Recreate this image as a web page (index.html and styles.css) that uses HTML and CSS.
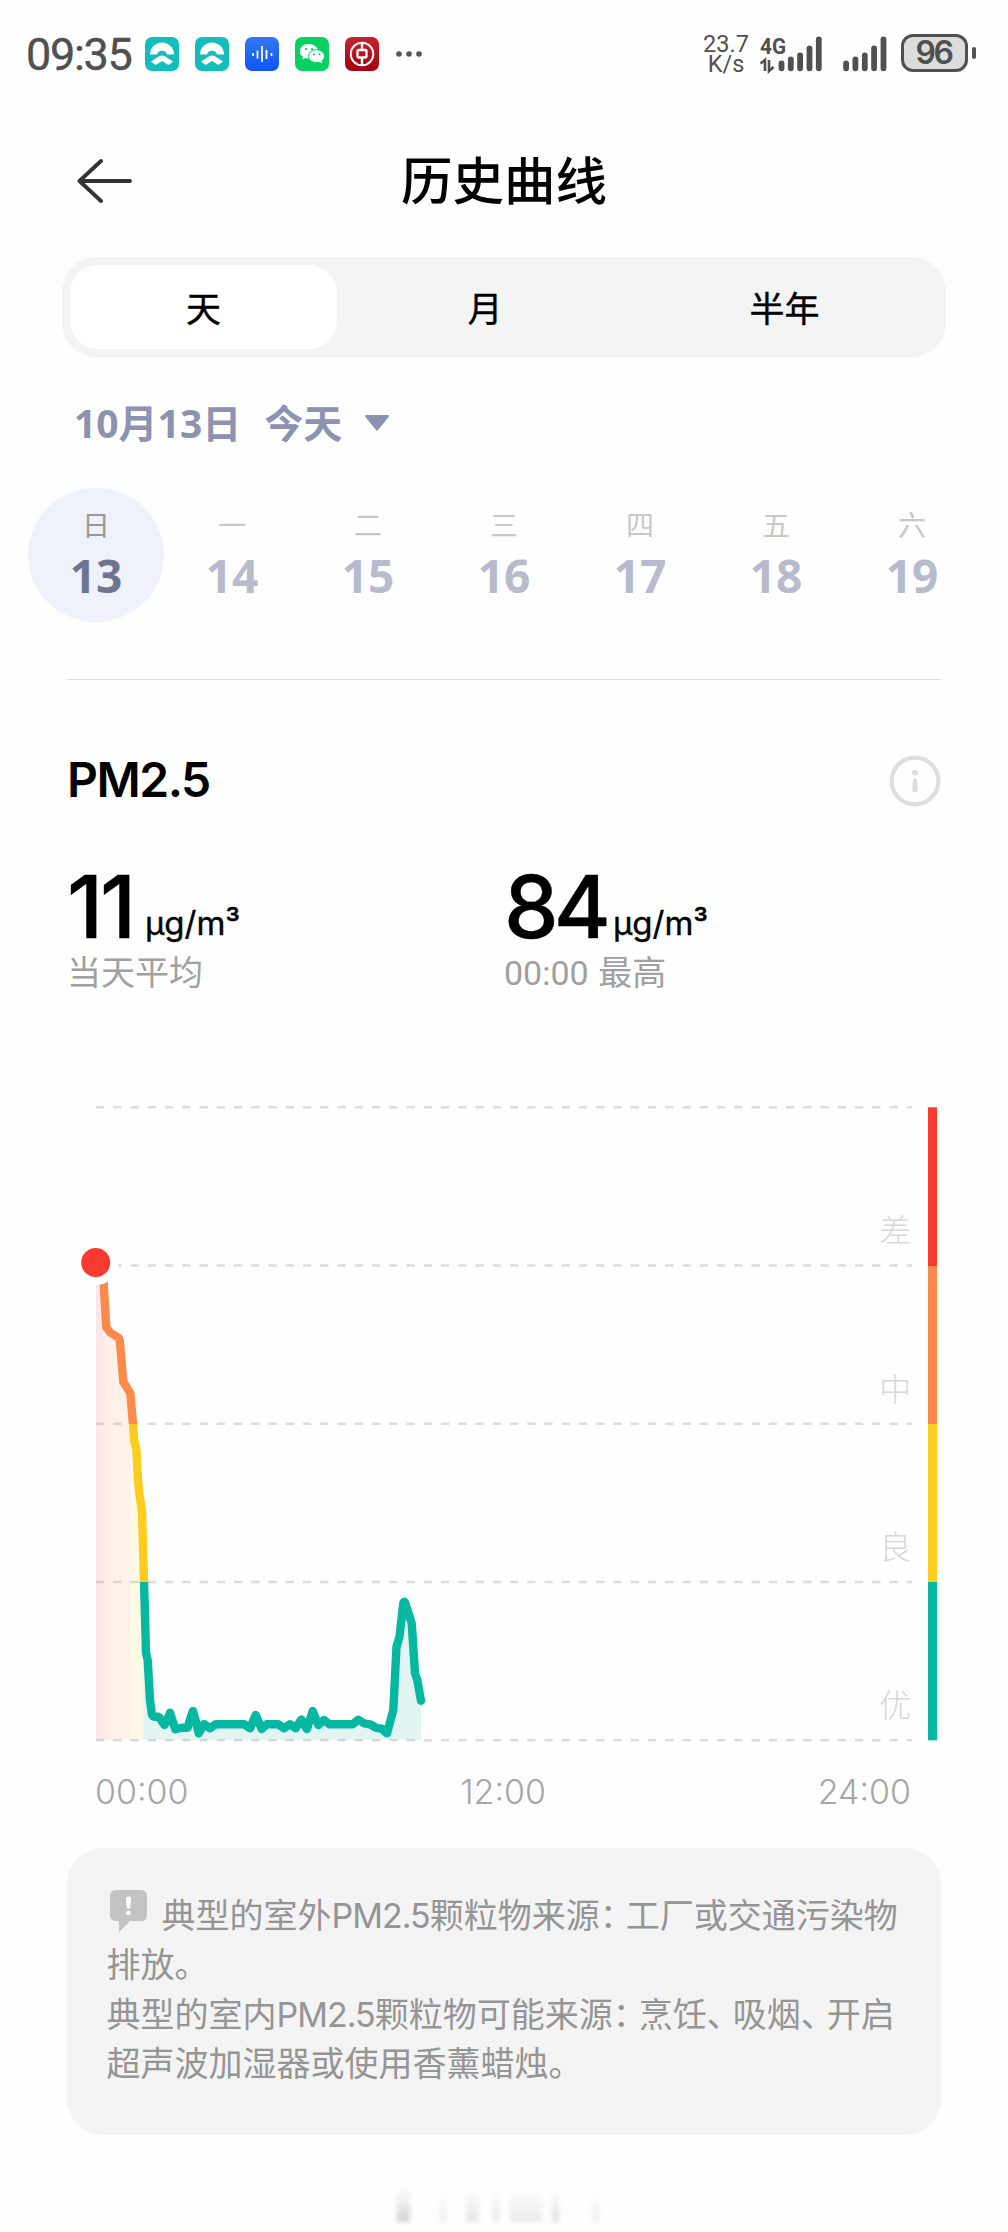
FILE: index.html
```html
<!DOCTYPE html>
<html lang="zh-CN">
<head>
<meta charset="utf-8">
<title>历史曲线</title>
<link rel="stylesheet" href="styles.css">
</head>
<body>
<div class="screen">
  <div class="status">
    <span class="clock">09:35</span>
    <div class="apps">
      <svg class="app" viewBox="0 0 34 34"><rect width="34" height="34" rx="7" fill="#13bdbb"/><path d="M5 17.500A12 12 0 0 1 29 17.500H22A5.200 5.200 0 0 0 12 17.500Z" fill="#fff"/><path d="M6 24.500 14.500 19Q17 17.800 19.500 19L28 24.500 23.500 28 17 24 10.500 28Z" fill="#fff"/></svg>
      <svg class="app" viewBox="0 0 34 34"><rect width="34" height="34" rx="7" fill="#13bdbb"/><path d="M5 17.500A12 12 0 0 1 29 17.500H22A5.200 5.200 0 0 0 12 17.500Z" fill="#fff"/><path d="M6 24.500 14.500 19Q17 17.800 19.500 19L28 24.500 23.500 28 17 24 10.500 28Z" fill="#fff"/></svg>
      <svg class="app" viewBox="0 0 34 34"><defs><linearGradient id="blue" x2="0" y2="1"><stop stop-color="#3478f6"/><stop offset="1" stop-color="#0d55f5"/></linearGradient></defs><rect width="34" height="34" rx="7" fill="url(#blue)"/><path d="M8 16v3M12.500 13.500v8M17 9v16M21.500 13v9M26.500 16v3" stroke="#fff" stroke-width="1.800"/></svg>
      <svg class="app" viewBox="0 0 34 34"><rect width="34" height="34" rx="7" fill="#07d160"/><path d="M14 7c-5.200 0-9 3.200-9 7.300 0 2.400 1.200 4.200 3.100 5.500L7.300 22.500l3.300-1.500q1.900.5 4.200.4" fill="#fff"/><ellipse cx="14" cy="14.200" rx="9" ry="7.200" fill="#fff"/><ellipse cx="21.500" cy="19.200" rx="8" ry="6.500" fill="#fff" stroke="#07d160"/><path d="m24 24.500 3.300 2-.8-3z" fill="#fff"/><g fill="#07c258"><circle cx="11" cy="12" r="1.100"/><circle cx="17" cy="12" r="1.100"/><circle cx="19" cy="17.300" r="1"/><circle cx="24.500" cy="17.300" r="1"/></g></svg>
      <svg class="app" viewBox="0 0 34 34"><defs><linearGradient id="red" x2="0" y2="1"><stop stop-color="#c7242f"/><stop offset="1" stop-color="#a00311"/></linearGradient></defs><rect width="34" height="34" rx="7" fill="url(#red)"/><g fill="none" stroke="#fff"><circle cx="17" cy="17" r="11.300" stroke-width="1.900"/><rect x="12.500" y="13" width="9" height="7.500" rx="1" stroke-width="2.300"/><path d="M17 5.500V13M17 20.500V28.500" stroke-width="2.400"/></g></svg>
    </div>
    <svg class="dots" viewBox="0 0 26 8"><g fill="#555"><circle cx="3" cy="4" r="2.800"/><circle cx="13" cy="4" r="2.800"/><circle cx="23" cy="4" r="2.800"/></g></svg>
    <div class="rate"><span>23.7</span><span>K/s</span></div>
    <svg class="signals" viewBox="0 0 136 40"><text class="net" x="0" y="19.500" textLength="26" lengthAdjust="spacingAndGlyphs">4G</text><path d="m.5 29.500 4.500-3.500v11M9 26v11l4.500-4" fill="none" stroke="#505050" stroke-width="2.600"/><path d="M22.200 29v5M31.500 25v9M40.800 21v13M50.200 14v20M59.500 5v29M86.800 29v5M96.100 25v9M105.500 21v13M114.800 14v20M124.200 5v29" transform="translate(-.7 .3)" fill="none" stroke="#505050" stroke-width="5.800" stroke-linecap="round"/></svg>
    <div class="battery"><span>96</span></div>
    <span class="nub"></span>
  </div>

  <header class="header">
    <svg class="back" viewBox="0 0 56 46"><path d="M3 23H53M24 3 2.500 23 24 43" fill="none" stroke="#333" stroke-width="3.800" stroke-linecap="round" stroke-linejoin="round"/></svg>
    <h1 class="title">历史曲线</h1>
  </header>

  <nav class="tabs">
    <span class="tab tab-day">天</span>
    <span class="tab tab-month">月</span>
    <span class="tab tab-half">半年</span>
  </nav>

  <div class="date">
    <span>10月13日</span><span class="today">今天</span>
    <svg class="caret" viewBox="0 0 26 18"><path d="M2 2H24L13 15.500Z" fill="#8c92af" stroke="#8c92af" stroke-width="2" stroke-linejoin="round"/></svg>
  </div>

  <div class="week">
    <div class="day selected"><span class="dow">日</span><span class="num">13</span></div>
    <div class="day"><span class="dow">一</span><span class="num">14</span></div>
    <div class="day"><span class="dow">二</span><span class="num">15</span></div>
    <div class="day"><span class="dow">三</span><span class="num">16</span></div>
    <div class="day"><span class="dow">四</span><span class="num">17</span></div>
    <div class="day"><span class="dow">五</span><span class="num">18</span></div>
    <div class="day"><span class="dow">六</span><span class="num">19</span></div>
  </div>

  <section class="metric">
    <div class="metric-head">
      <h2 class="metric-name">PM2.5</h2>
      <svg class="info" viewBox="0 0 52 52"><circle cx="26" cy="26" r="23.400" fill="none" stroke="#dedede" stroke-width="4.200"/><circle cx="26" cy="17.700" r="3" fill="#dedede"/><path d="M24 24q2-1.500 4 0l.8 11q-.4 2.500-2.800 2.500t-2.800-2.500z" fill="#dedede"/></svg>
    </div>
    <div class="stats">
      <div class="stat">
        <div class="reading"><span class="value value-avg">11</span><span class="unit">µg/m³</span></div>
        <div class="caption">当天平均</div>
      </div>
      <div class="stat">
        <div class="reading"><span class="value value-max">84</span><span class="unit">µg/m³</span></div>
        <div class="caption"><span class="hour">00:00</span> 最高</div>
      </div>
    </div>
  </section>

  <svg class="chart" viewBox="60 1090 900 670">
    <defs>
      <linearGradient id="level" gradientUnits="userSpaceOnUse" x1="0" y1="1107.300" x2="0" y2="1740.300">
        <stop offset=".25" stop-color="#fa3a2f"/><stop offset=".25" stop-color="#fc8b4b"/>
        <stop offset=".5" stop-color="#fc8b4b"/><stop offset=".5" stop-color="#fccd1e"/>
        <stop offset=".75" stop-color="#fccd1e"/><stop offset=".75" stop-color="#06b7a2"/>
      </linearGradient>
      <linearGradient id="area" gradientUnits="userSpaceOnUse" x1="96" y1="0" x2="421" y2="0">
        <stop offset="0" stop-color="#fde6ea"/><stop offset=".015" stop-color="#fde8ea"/><stop offset=".04" stop-color="#fff1ea"/>
        <stop offset=".1" stop-color="#fff1ea"/><stop offset=".112" stop-color="#fffae6"/>
        <stop offset=".142" stop-color="#fffae6"/><stop offset=".15" stop-color="#e2f5f3"/>
      </linearGradient>
    </defs>
    <path d="M96 1265V1740H421V1700.700L417.300 1680 414.300 1673.300 410.700 1623.300 404.300 1601.700 400 1636.700 397 1646.700 393.300 1710 387 1733.300 376.700 1728 200 1728 152 1716 147.700 1660 145 1616.700 144 1581.700 142 1511.700 137.300 1460 133 1423.700 130.700 1394 123.300 1381.700 119.300 1338.300 106.300 1327.300 103 1265Z" fill="url(#area)"/>
    <path d="M96 1107.300H912M96 1265.500H912M96 1423.800H912M96 1582H912M96 1740.300H912" stroke="#777" stroke-opacity=".25" stroke-width="2.600" stroke-dasharray="8.200 9.050"/>
    <path d="M103 1268 103.700 1284 106.300 1327.300 110.700 1333 118.300 1337.500Q119.600 1338.500 120 1343L123.300 1381.700 130.300 1393 133 1423.700 134.300 1441.700 136.300 1448 138 1480 139.300 1493 142 1511.700 144 1581.700 145 1616.700 146 1653.300 147.700 1660 150 1700 151.800 1714Q152.300 1716.700 155 1716.700H157.500Q159.500 1716.700 161 1720L164.300 1725 166.500 1722 170 1712.700 175.300 1729.300 181.700 1727.700H187.700L190.500 1718 193 1711 195.500 1720 198.700 1733.300 204 1724 210 1728.300 215.700 1724.300H244.300L250 1728.300 255.700 1715 261.700 1729 266.700 1724.300H278.300L284 1728.300 290 1724.300 295.700 1728.300 301.300 1719.500 307 1729 312.700 1711 318.300 1725 324 1720 329.300 1724.300H352.700L358.300 1719.700 364 1723.300 370 1724.300 376.700 1728 381.700 1728.700 387 1733.300 393.300 1710 396.500 1646.700 399.500 1636.700 403.300 1603.300Q404.300 1600 405.300 1603.300L411.700 1623.300 415 1673.300 417.300 1680 421 1700.700" fill="none" stroke="url(#level)" stroke-width="8.400" stroke-linejoin="round" stroke-linecap="round"/>
    <circle cx="95.700" cy="1262.500" r="22.800" fill="#fefefe"/>
    <circle cx="95.700" cy="1262.500" r="14.500" fill="#fa3a2f"/>
    <rect x="928" y="1107.300" width="9" height="633" fill="url(#level)"/>
    <g class="grade" text-anchor="middle"><text x="895.300" y="1242">差</text><text x="895.300" y="1400.500">中</text><text x="895.300" y="1558.500">良</text><text x="895.300" y="1716.500">优</text></g>
  </svg>
  <div class="axis"><span>00:00</span><span>12:00</span><span>24:00</span></div>

  <div class="note">
    <p class="line"><svg class="bubble" viewBox="0 0 38 43"><path d="M7 0H31Q37 0 37 6V25Q37 31 31 31H20L9 42V31H7Q0 31 0 25V6Q0 0 7 0Z" fill="#c3c3c3"/><path d="M15.800 7.500q2.700-2 5.400 0l-1 10.500q-1.700 1.500-3.400 0z" fill="#fff"/><circle cx="18.500" cy="23" r="2.300" fill="#fff"/></svg>典型的室外<span class="latin">PM2.5</span>颗粒物来源<span class="punct">：</span>工厂或交通污染物</p>
    <p class="line">排放。</p>
    <p class="line">典型的室内<span class="latin">PM2.5</span>颗粒物可能来源<span class="punct">：</span>烹饪<span class="punct">、</span>吸烟<span class="punct">、</span>开启</p>
    <p class="line">超声波加湿器或使用香薰蜡烛。</p>
  </div>

  <div class="peek"><i class="p1"></i><i class="p2"></i><i class="p3"></i><i class="p4"></i><i class="p5"></i><i class="p6"></i><i class="p7"></i></div>
</div>
</body>
</html>
```
FILE: styles.css
```css
* { box-sizing: border-box; }
body {
  margin: 0;
  background: #fefefe;
  color: #000;
  font-family: Inter, "Noto Sans CJK SC", sans-serif;
}
h1, h2, p { margin: 0; }
svg { display: block; flex: none; }
.screen {
  width: 1008px;
  height: 2232px;
  overflow: hidden;
  display: flex;
  flex-direction: column;
}

.status {
  display: flex;
  align-items: center;
  height: 108px;
  padding-left: 26px;
  color: #505050;
  font-family: Roboto, sans-serif;
}
.clock { width: 119px; font-size: 45px; letter-spacing: -1.3px; -webkit-text-stroke: .4px; }
.apps { display: flex; gap: 16px; }
.app { width: 34px; height: 34px; }
.dots { width: 26px; height: 8px; margin: 0 0 1px 17px; }
.rate {
  display: flex;
  flex-direction: column;
  width: 60px;
  margin-left: 274px;
  text-align: center;
  font-size: 23.500px;
  line-height: 20.5px;
}
.signals { width: 136px; height: 40px; margin-left: 4px; }
.net { font: 700 22px Roboto, sans-serif; fill: #505050; }
.battery {
  width: 67px;
  height: 38px;
  margin: 0 0 2px 5px;
  border: 3px solid #505050;
  border-radius: 12px;
  background: #dcdcdc;
  font: 600 32px/32px Inter, sans-serif;
  letter-spacing: -2.5px;
  text-indent: -2px;
  text-align: center;
}
.nub { width: 4px; height: 12px; margin: 0 0 2px 4px; border-radius: 2px; background: #505050; }

.header { display: grid; grid-template-columns: 128px 1fr 128px; align-items: center; height: 149px; padding: 0 0 3px; }
.back { width: 56px; height: 46px; margin-left: 77px; }
.title { text-align: center; font-size: 51.500px; font-weight: 500; line-height: 72px; }

.tabs {
  display: flex;
  height: 100px;
  margin: 0 62px;
  padding: 8px;
  border-radius: 34px;
  background: #f4f4f4;
}
.tab {
  display: flex;
  align-items: center;
  justify-content: center;
  padding-bottom: 2px;
  font-size: 35px;
  -webkit-text-stroke: .4px;
}
.tab-day { width: 267px; border-radius: 28px; background: #fff; }
.tab-month { width: 296px; }
.tab-half { width: 303px; }

.date {
  display: flex;
  align-items: center;
  height: 131px;
  padding: 1px 0 0 74px;
  color: #8c92af;
  font: 700 39px/58px "Open Sans", "Noto Sans CJK SC", sans-serif;
}
.today { margin-left: 23px; }
.caret { width: 26px; height: 18px; margin-left: 22px; }

.week { display: grid; grid-template-columns: repeat(7, 136px); height: 134px; margin-left: 28px; }
.day { display: flex; flex-direction: column; align-items: center; padding-top: 19px; border-radius: 50%; color: #b8bbcd; }
.dow { height: 38px; font-size: 28px; line-height: 38px; color: #c8c8c8; }
.num { height: 60px; font: 700 46px/60px "Open Sans", sans-serif; }
.selected { background: #eff2fa; color: #6e7593; }
.selected .dow { color: #999; }

.metric { height: 411px; margin: 57px 67px 0; border-top: 1px solid #dcdcdc; }
.metric-head { display: flex; justify-content: space-between; align-items: center; height: 52px; margin-top: 75px; }
.metric-name { padding-bottom: 3px; font-size: 48px; font-weight: 600; letter-spacing: -1.5px; }
.info { width: 52px; height: 52px; margin-bottom: 1px; }
.stats { display: grid; grid-template-columns: 437px 437px; margin-top: 50px; }
.reading { display: flex; align-items: baseline; height: 90px; line-height: 100px; white-space: nowrap; }
.value { font-size: 87px; font-weight: 500; -webkit-text-stroke: .4px; }
.value-avg { width: 78px; letter-spacing: -3px; }
.value-max { width: 109px; letter-spacing: -5px; }
.unit { padding-bottom: 3px; font-size: 33px; font-weight: 400; -webkit-text-stroke: .4px; position: relative; top: -3px; }
.caption { font-size: 34px; line-height: 51px; color: #a0a0a0; }
.hour { font-family: Roboto, sans-serif; }

.chart { width: 900px; height: 670px; margin-left: 60px; }
.grade { font: 300 32px "Noto Sans CJK SC", sans-serif; fill: #d8d8d8; }
.axis {
  display: flex;
  justify-content: space-between;
  height: 88px;
  padding: 8px 97px 0 95px;
  font-size: 34px;
  line-height: 48px;
  font-weight: 300;
  color: #a6a6a6;
}

.note { height: 287px; margin: 0 67px; padding: 43px 0 0 39.500px; border-radius: 36px; background: #f4f4f4; color: #959595; }
.line { display: flex; height: 49.300px; font-size: 34px; line-height: 49.300px; white-space: nowrap; }
.bubble { width: 38px; height: 43px; margin: -1px 14px 0 3px; }
.latin { letter-spacing: -1px; }
.punct { margin-right: -8px; }

.peek { position: relative; width: 228px; height: 34px; margin: 53px 0 0 390px; }
.peek i { position: absolute; top: 0; height: 34px; background: linear-gradient(#fefefe, #d4d4d4); filter: blur(2px); }
.p1 { left: 7px; width: 13px; }
.p2 { left: 49px; width: 8px; opacity: .3; }
.p3 { left: 76px; width: 13px; opacity: .55; }
.p4 { left: 103px; width: 6px; opacity: .5; }
.p5 { left: 120px; width: 32px; opacity: .45; }
.p6 { left: 162px; width: 7px; opacity: .7; }
.p7 { left: 202px; width: 7px; opacity: .35; }
```
